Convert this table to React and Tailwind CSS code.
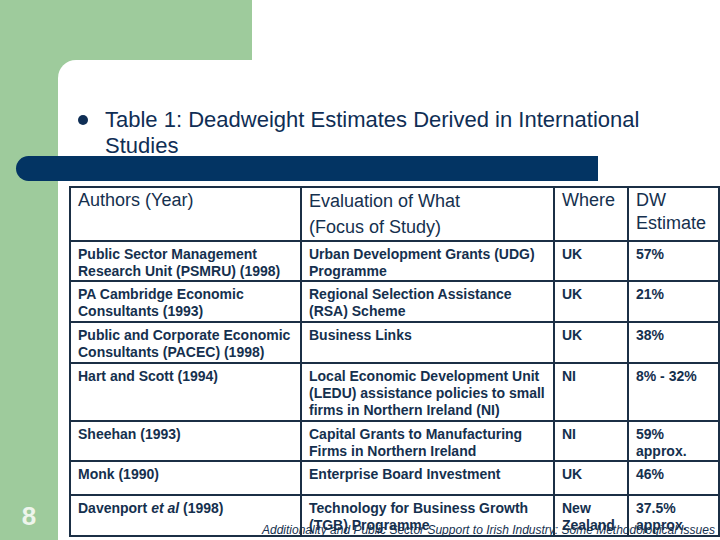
import React from 'react';

const rows = [
    { h: 'h-[40px]', a: ['Public Sector Management', 'Research Unit (PSMRU) (1998)'], e: ['Urban Development Grants (UDG)', 'Programme'], w: ['UK'], d: ['57%'] },
    { h: 'h-[41px]', a: ['PA Cambridge Economic', 'Consultants (1993)'], e: ['Regional Selection Assistance', '(RSA) Scheme'], w: ['UK'], d: ['21%'] },
    { h: 'h-[41px]', a: ['Public and Corporate Economic', 'Consultants (PACEC) (1998)'], e: ['Business Links'], w: ['UK'], d: ['38%'] },
    { h: 'h-[58px]', a: ['Hart and Scott (1994)'], e: ['Local Economic Development Unit', '(LEDU) assistance policies to small', 'firms in Northern Ireland (NI)'], w: ['NI'], d: ['8% - 32%'] },
    { h: 'h-[40px]', a: ['Sheehan (1993)'], e: ['Capital Grants to Manufacturing', 'Firms in Northern Ireland'], w: ['NI'], d: ['59%', 'approx.'] },
    { h: 'h-[34px]', a: ['Monk (1990)'], e: ['Enterprise Board Investment'], w: ['UK'], d: ['46%'] },
    {
        h: 'h-[41px]',
        a: [<>Davenport <i>et al</i> (1998)</>],
        e: ['Technology for Business Growth', '(TGB) Programme'],
        w: ['New', 'Zealand'],
        d: ['37.5%', 'approx.'],
    },
];

const Lines = ({ items }) => items.map((t, i) => <div key={i}>{t}</div>);

export default function App() {
    const cell = 'border-2 border-[#1b2f45] align-top pl-[7px] pr-[4px] pt-[4px]';

    return (
        <div className="w-[720px] h-[540px] relative overflow-hidden bg-white font-['Liberation_Sans',Arial,sans-serif]">
            {/* Top strip */}
            <div className="flex h-[60px]">
                <div className="w-[252px] bg-[#9ecb9c]"></div>
                <div className="flex-1 bg-white"></div>
            </div>

            <div className="flex h-[480px] bg-[#9ecb9c]">
                {/* Green side strip with slide number */}
                <div className="w-[60px] flex flex-col justify-end items-center pb-[9px]">
                    <span className="text-[26px] leading-[30px] font-bold text-[#eef5ec]">8</span>
                </div>

                {/* White slide panel */}
                <div className="flex-1 bg-white rounded-tl-[18px] pt-[47px] flex flex-col">
                    <div className="flex items-start">
                        <span className="ml-[20px] mt-[8px] w-[10px] h-[10px] rounded-full bg-[#0f2e55] shrink-0"></span>
                        <h1 className="ml-[17px] text-[22px] leading-[26px] text-[#0f2e55]">
                            Table 1: Deadweight Estimates Derived in International
                            <br />
                            Studies
                        </h1>
                    </div>

                    <div className="-mt-[3px] -ml-[42px] w-[582px] h-[25px] rounded-l-full bg-[#033463]"></div>

                    <table className="mt-[5px] ml-[11px] w-[649px] table-fixed border-collapse text-[#15304e]">
                        <colgroup>
                            <col className="w-[231px]" />
                            <col className="w-[253px]" />
                            <col className="w-[74px]" />
                            <col className="w-[91px]" />
                        </colgroup>
                        <thead>
                            <tr className="h-[54px] text-[18px] font-normal">
                                <th className={`${cell} font-normal text-left leading-[23px] !pt-[1px]`}>Authors (Year)</th>
                                <th className={`${cell} font-normal text-left leading-[26px] !pt-0`}>
                                    Evaluation of What
                                    <br />
                                    (Focus of Study)
                                </th>
                                <th className={`${cell} font-normal text-left leading-[23px] !pt-[1px]`}>Where</th>
                                <th className={`${cell} font-normal text-left leading-[23px] !pt-[1px]`}>
                                    DW
                                    <br />
                                    Estimate
                                </th>
                            </tr>
                        </thead>
                        <tbody className="text-[14px] leading-[17px] font-bold">
                            {rows.map((r, i) => (
                                <tr key={i} className={r.h}>
                                    <td className={cell}><Lines items={r.a} /></td>
                                    <td className={cell}><Lines items={r.e} /></td>
                                    <td className={cell}><Lines items={r.w} /></td>
                                    <td className={cell}><Lines items={r.d} /></td>
                                </tr>
                            ))}
                        </tbody>
                    </table>
                </div>
            </div>

            {/* Slide footer */}
            <div className="absolute left-[262px] top-[523px] text-[12px] leading-[14px] italic whitespace-nowrap text-[#15304e]">
                Additionality and Public Sector Support to Irish Industry: Some Methodological Issues
            </div>
        </div>
    );
}
